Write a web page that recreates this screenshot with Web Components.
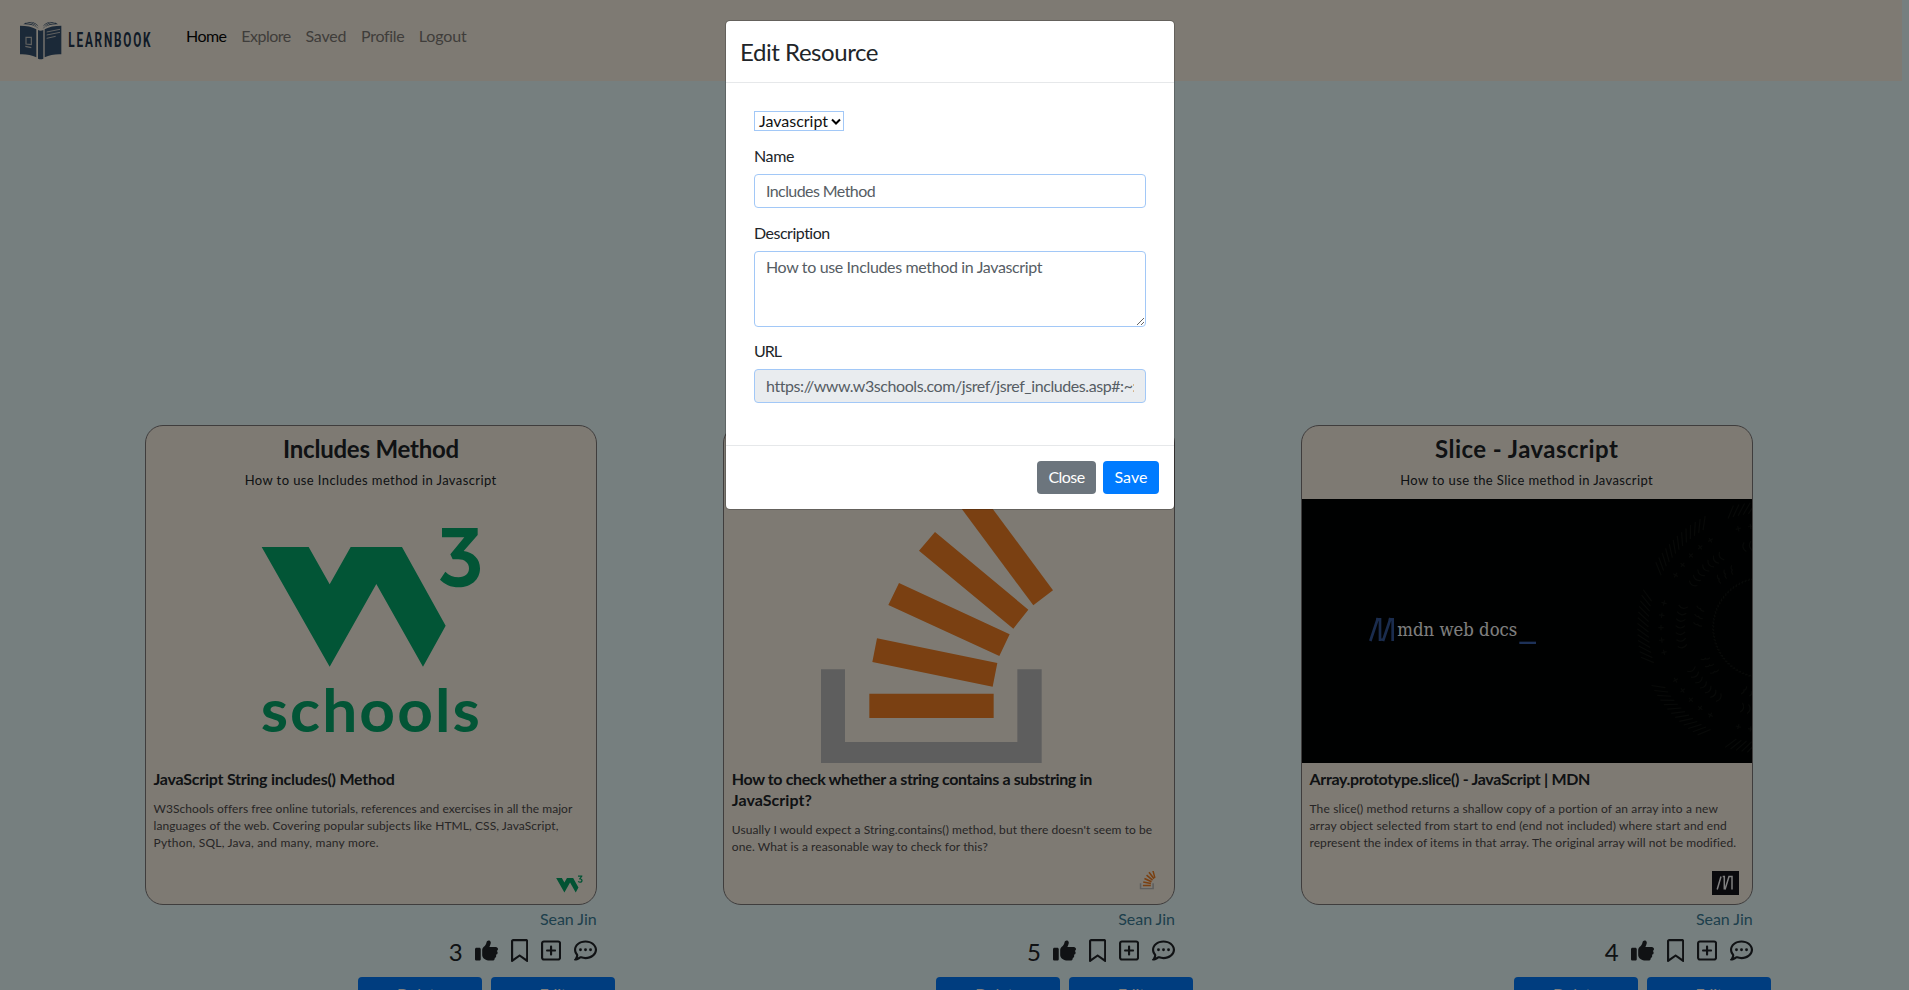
<!DOCTYPE html>
<html lang="en">
<head>
<meta charset="utf-8">
<title>Learnbook</title>
<style>
html, body { margin: 0; height: 990px; overflow: hidden; }
body { background: #ecfeff; font-family: Lato, "Noto Sans", sans-serif; font-size: 16px; line-height: 24px; color: #212529; }
</style>
</head>
<body>
<learnbook-app></learnbook-app>
<script>
const ctx = document.createElement('canvas').getContext('2d');
/* letter spacing that makes a text take the given width */
function spacing(text, width, size, weight) {
  ctx.font = `${weight || 400} ${size}px Lato, "Noto Sans", sans-serif`;
  return (width - ctx.measureText(text).width) / text.length;
}
function define(name, render, after) {
  customElements.define(name, class extends HTMLElement {
    constructor() { super(); this.attachShadow({ mode: 'open' }); }
    connectedCallback() {
      this.shadowRoot.innerHTML = render(this);
      if (after) after(this);
    }
  });
}
const at = (el, n, d = '') => el.getAttribute(n) ?? d;

/* one line of text: s size, w width, b weight, l line height */
define('text-line', el => {
  const s = +at(el, 's', 16), w = +at(el, 'w'), b = at(el, 'b', '400');
  const sp = spacing(at(el, 't'), w, s, b);
  return `<style>:host{display:block;flex:none;width:${w}px;white-space:nowrap;font-size:${s}px;font-weight:${b};line-height:${at(el, 'l', 24)}px;letter-spacing:${sp.toFixed(3)}px}</style>${at(el, 't')}`;
});

define('brand-logo', () => `<style>:host{display:block;width:186px;height:81px}svg{display:block;overflow:visible}</style>
<svg width="186" height="81" viewBox="0 0 558 243"><g fill="#365271">
<path d="M60 77C80 77 96 80 109 88V172C94 165 77 162 60 163Z"/><path d="M184 77C164 77 147 80 134 88V172C149 165 166 162 184 163Z"/>
<path d="M114 90Q122 94 130 90V176Q122 179 114 176Z"/>
<path d="M70 73Q82 63 96 68Q108 74 116 86Q98 72 70 73Z"/><path d="M92 65Q108 66 116 80Q106 70 92 65Z"/>
<path d="M174 73Q162 63 148 68Q136 74 128 86Q146 72 174 73Z"/><path d="M152 65Q136 66 128 80Q138 70 152 65Z"/></g>
<g fill="none" stroke="#c4c4c0" stroke-width="3.5"><path d="M78 112H94V134L78 132ZM76 139L94 143"/><path d="M140 96L180 88M140 105L180 97M140 115L167 109" stroke-width="3"/></g>
<path d="M78 68Q96 68 112 82M166 68Q148 68 132 82" fill="none" stroke="#fdf5e6" stroke-width="2.5"/>
<text x="205" y="141" textLength="252" lengthAdjust="spacingAndGlyphs" font-family="Roboto" font-weight="700" font-size="59" letter-spacing="9" fill="#23374e">LEARNBOOK</text></svg>`);

define('nav-bar', () => `<style>:host{display:flex;box-sizing:border-box;width:1902px;height:81px;padding-left:0;background:#fdf5e6}
nav{display:flex;gap:14.7px;padding-top:24px;color:#7f7b76}.on{color:#070707}</style>
<brand-logo></brand-logo><nav>
<text-line class="on" t="Home" w="40.5"></text-line><text-line t="Explore" w="49.5"></text-line><text-line t="Saved" w="41"></text-line><text-line t="Profile" w="43"></text-line><text-line t="Logout" w="48"></text-line></nav>`);

const w3 = `<path d="M395 396H536L599 508L662 396H816L947 632L879 755L739 507L599 755Z"/><path d="M936 339H1043V360L1001 408C1030 412 1050 432 1050 460C1050 495 1022 517 987 517C962 517 943 507 930 494L946 470C957 481 970 487 986 487C1005 487 1017 476 1017 460C1017 443 1003 433 985 433H968L961 418L1003 367H936Z"/>`;
const so = `<path fill="#bcbcbc" d="M333 538H405V756H922V538H995V819H333Z"/><path fill="#f48024" d="M478 611H851V684H478ZM501 445L862 519L848 590L487 516ZM567 279L899 433L868 498L535 345ZM675 126L955 359L910 416L627 182Z"/>`;
const polar = (r, a) => [1419 - r * Math.cos(a), 638 - r * Math.sin(a)];
function rings() {
  let o = '';
  const put = (r, deg, rot, d) => {
    const [x, y] = polar(r, deg * Math.PI / 180);
    if (x < 1400) o += `<path transform="translate(${x.toFixed(1)} ${y.toFixed(1)}) rotate(${(deg + rot).toFixed(1)})" d="${d}"/>`;
  };
  for (let g = -90; g <= 90; g += 45) {
    for (let i = -6; i <= 6; i++) put(360, g + i * 2.6, 38, 'M-21 0H21');
    for (let i = -2; i <= 2; i++) put(306, g + i * 7, 0, 'M-8 0H8M0-8V8');
    for (let i = -3; i <= 3; i++) put(248, g + i * 4.6, 0, 'M-14-6Q0 8 14-6');
    for (let i = -1; i <= 1; i++) put(196, g + 10 + i * 7, 20, 'M-14 0Q-4 6 0 0Q4 6 14 0');
  }
  for (let a = -90; a <= 90; a += 4) put(150, a, 45, 'M-3 0H3V3');
  return o;
}
const art = {
  w3: () => `<g transform="translate(-16 -84) scale(.33333)" fill="#04aa6d">${w3}<text x="392" y="951" font-family="Lato" font-weight="700" font-size="180" letter-spacing="6" textLength="664" lengthAdjust="spacingAndGlyphs">schools</text></g>`,
  so: () => `<g transform="translate(-14 -9) scale(.33333)">${so}<path fill="#f48024" d="M728 20H821L1029 301L970 346Z"/></g>`,
  mdn: () => `<rect width="450" height="264" fill="#010302"/><g transform="translate(-12 -84) scale(.33333)"><g fill="none" stroke="#101311" stroke-width="3.5">${rings()}</g>
<path d="M241 678L264 609M270 609V678M279 678L302 609M308 609V678" fill="none" stroke="#35599d" stroke-width="8"/><path d="M258 613H273M268 674H281M296 613H311" stroke="#35599d" stroke-width="7"/>
<rect x="688" y="680" width="50" height="7" fill="#3a63b0"/><text x="322" y="663" font-family="DejaVu Serif" font-size="56" textLength="360" lengthAdjust="spacingAndGlyphs" fill="#fff">mdn web docs</text></g>`
};
define('preview-art', el => `<style>:host{display:block;height:264px}svg{display:block}</style><svg width="450" height="264" viewBox="0 0 450 264">${art[at(el, 'kind')]()}</svg>`);

const fav = {
  w3: `<g transform="translate(-15.8 -9.1) scale(.0404)" fill="#04a567">${w3}</g>`,
  so: `<g transform="translate(-1.3 .8) scale(.0213)"><g>${so}<path fill="#f48024" d="M735 42L795 0L1029 301L970 346ZM910 -60L980 -80L1075 280L1010 290Z"/></g></g>`,
  mdn: `<rect width="27" height="24" fill="#15141a"/><path d="M5.2 18.5L9 5.5M10.7 5.5H12.3V18.5M13 18.5L17 5.5H20V18.5" fill="none" stroke="#fff" stroke-width="1.5"/>`
};
define('site-icon', el => `<style>:host{display:block;width:27px;height:24px}svg{display:block}</style><svg width="27" height="24">${fav[at(el, 'kind')]}</svg>`);

const icons = {
  thumb: [512, 'M313.4 32.9c26 5.2 42.9 30.5 37.7 56.5l-2.3 11.4c-5.3 26.7-15.1 52.1-28.8 75.2H464c26.5 0 48 21.5 48 48c0 18.5-10.5 34.6-25.9 42.6C497 275.4 504 288.9 504 304c0 23.4-16.8 42.9-38.9 47.1c4.4 7.3 6.9 15.8 6.9 24.9c0 21.3-13.9 39.4-33.1 45.6c.7 3.3 1.1 6.8 1.1 10.4c0 26.5-21.5 48-48 48H294.5c-19 0-37.5-5.6-53.3-16.1l-38.5-25.7C176 420.4 160 390.4 160 358.3V320 272 247.1c0-29.2 13.3-56.7 36-75l7.4-5.9c26.5-21.2 44.6-51 51.2-84.2l2.3-11.4c5.2-26 30.5-42.9 56.5-37.7zM32 192H96c17.7 0 32 14.3 32 32V448c0 17.7-14.3 32-32 32H32c-17.7 0-32-14.3-32-32V224c0-17.7 14.3-32 32-32z'],
  mark: [384, 'M0 48C0 21.5 21.5 0 48 0l0 48V441.4l130.1-92.9c8.3-6 19.6-6 27.9 0L336 441.4V48H48V0H336c26.5 0 48 21.5 48 48V488c0 9-5 17.2-13 21.3s-17.6 3.4-24.9-1.8L192 397.5 37.9 507.5c-7.3 5.2-16.9 5.9-24.9 1.8S0 497 0 488V48z'],
  plus: [448, 'M64 80c-8.8 0-16 7.2-16 16V416c0 8.8 7.2 16 16 16H384c8.8 0 16-7.2 16-16V96c0-8.8-7.2-16-16-16H64zM0 96C0 60.7 28.7 32 64 32H384c35.3 0 64 28.7 64 64V416c0 35.3-28.7 64-64 64H64c-35.3 0-64-28.7-64-64V96zM200 344V280H136c-13.3 0-24-10.7-24-24s10.7-24 24-24h64V168c0-13.3 10.7-24 24-24s24 10.7 24 24v64h64c13.3 0 24 10.7 24 24s-10.7 24-24 24H248v64c0 13.3-10.7 24-24 24s-24-10.7-24-24z'],
  dots: [512, 'M168.2 384.9c-15-5.4-31.7-3.1-44.6 6.4c-8.2 6-22.3 14.8-39.4 22.7c5.6-14.7 9.9-31.3 11.3-49.4c1-12.9-3.3-25.7-11.8-35.5C60.4 302.8 48 272 48 240c0-79.5 83.3-160 208-160s208 80.5 208 160s-83.3 160-208 160c-31.6 0-61.3-5.5-87.8-15.1zM26.3 423.8c-1.6 2.7-3.3 5.4-5.1 8.1l-.3 .5c-1.6 2.3-3.2 4.6-4.8 6.9c-3.5 4.7-7.3 9.3-11.3 13.5c-4.6 4.6-5.9 11.4-3.4 17.4c2.5 6 8.3 9.9 14.8 9.9c5.1 0 10.2-.3 15.3-.8l.7-.1c4.4-.5 8.8-1.1 13.2-1.9c.8-.1 1.6-.3 2.4-.5c17.8-3.5 34.9-9.5 50.1-16.1c22.9-10 42.4-21.9 54.3-30.6c31.8 11.5 67 17.9 104.1 17.9c141.4 0 256-93.1 256-208S397.4 32 256 32S0 125.1 0 240c0 45.1 17.7 86.8 47.7 120.9c-1.9 24.5-11.4 46.3-21.4 62.9zM144 272a32 32 0 1 0 0-64 32 32 0 1 0 0 64zm144-32a32 32 0 1 0 -64 0 32 32 0 1 0 64 0zm80 32a32 32 0 1 0 0-64 32 32 0 1 0 0 64z']
};
define('action-icon', el => { const [w, d] = icons[at(el, 'kind')];
  return `<style>:host{display:block;flex:none}svg{display:block}</style><svg width="${w * 23 / 512}" height="23" viewBox="0 0 ${w} 512"><path fill="#212529" d="${d}"/></svg>`; });

define('ui-button', el => `<style>:host{display:flex;flex:none;box-sizing:border-box;justify-content:center;width:${at(el, 'w')}px;height:33px;padding-top:3.5px;border-radius:4px;color:#fff;background:var(--bg,#007bff)}</style><slot></slot>`);

define('resource-card', el => `<style>
:host{display:block;width:452px}
article{display:flex;flex-direction:column;box-sizing:border-box;height:480px;border:1px solid #7e7a7a;border-radius:18px;background:#fdf5e6;overflow:hidden}
header{display:flex;flex-direction:column;align-items:center;height:73px}
.body{height:132px;box-sizing:border-box;padding:5px 7.5px 0}
.desc{color:#4e4b4c;padding-top:11px}
.site{display:flex;justify-content:flex-end;padding-right:13px;margin-top:-24px}
.by{display:flex;justify-content:flex-end;color:#3c7e98;padding-top:2px}
.acts{display:flex;gap:13px;justify-content:flex-end;padding-top:8px;height:38px}
.acts text-line{padding-top:1px}
.btns{display:flex;gap:9px;padding-left:213px}
</style><article><header><slot name="head"></slot></header><preview-art kind="${at(el, 'kind')}"></preview-art>
<div class="body"><slot name="title"></slot><div class="desc"><slot name="desc"></slot></div></div>
<div class="site"><site-icon kind="${at(el, 'kind')}"></site-icon></div></article>
<div class="by"><text-line t="Sean Jin" w="57"></text-line></div>
<div class="acts"><text-line t="${at(el, 'likes')}" s="24" w="13" l="24"></text-line><action-icon kind="thumb"></action-icon><action-icon kind="mark"></action-icon><action-icon kind="plus"></action-icon><action-icon kind="dots"></action-icon></div>
<div class="btns"><ui-button w="124"><text-line t="Delete" w="46" l="25"></text-line></ui-button><ui-button w="124"><text-line t="Edit" w="27" l="25"></text-line></ui-button></div>`);

define('form-field', el => {
  const t = at(el, 'value'), fit = at(el, 'fit', t);
  const sp = spacing(fit, +at(el, 'fw'), 16).toFixed(3);
  const css = `<style>:host{display:block}
input,textarea{display:block;box-sizing:border-box;width:392px;height:34px;margin:0 0 12px;padding:4px 11px 6px;border:1px solid #a2c8f7;border-radius:4px;background:#fff;font:16px/22px Lato,"Noto Sans",sans-serif;letter-spacing:${sp}px;color:#565d64}
textarea{height:76px;padding-top:4px;resize:vertical;overflow:hidden}input:disabled{background:#e9ecef}text-line{padding-bottom:6px}</style><text-line t="${at(el, 'label')}" w="${at(el, 'lw')}" l="25"></text-line>`;
  return css + (el.hasAttribute('area') ? `<textarea>${t}</textarea>` : `<input value="${t}" ${el.hasAttribute('off') ? 'disabled' : ''}>`);
});

define('select-box', () => `<style>:host{display:flex;box-sizing:border-box;width:90px;height:20px;margin:0 0 12px;padding-left:4px;border:1px solid #a2c8f7;background:#fff;color:#111}
svg{display:block;margin:6px 0 0 3px}</style><text-line t="Javascript" w="69" l="18"></text-line><svg width="10" height="8" viewBox="0 0 10 8"><path d="M1 1.5L5 5.5L9 1.5" fill="none" stroke="#000" stroke-width="2"/></svg>`);

define('edit-dialog', () => `<style>
:host{position:absolute;left:0;top:0;width:1909px;height:990px;background:rgba(0,0,0,.5)}
section{box-sizing:border-box;width:450px;height:490px;margin:20px 0 0 725px;border:1px solid rgba(0,0,0,.2);border-radius:5px;background:#fff;background-clip:padding-box}
header{height:62px;padding:12.5px 0 0 14px;box-sizing:border-box;border-bottom:1px solid #e6e8ea}
form{display:flex;flex-direction:column;height:362px;box-sizing:border-box;padding:28px 28px 0}
footer{display:flex;gap:7px;justify-content:flex-end;padding:15px 15px 0 0;border-top:1px solid #e6e8ea}
ui-button:first-child{--bg:#6c757d}
</style><section><header><text-line t="Edit Resource" s="24" w="138" l="36"></text-line></header>
<form><select-box></select-box>
<form-field label="Name" lw="40" value="Includes Method" fw="109"></form-field>
<form-field area label="Description" lw="76" value="How to use Includes method in Javascript" fw="277"></form-field>
<form-field style="margin-top:-1px" off label="URL" lw="27" value="https://www.w3schools.com/jsref/jsref_includes.asp#:~:text=The" fit="https://www.w3schools.com/jsref/jsref_includes.asp#:~" fw="366"></form-field></form>
<footer><ui-button w="59"><text-line t="Close" w="36"></text-line></ui-button><ui-button w="56"><text-line t="Save" w="33"></text-line></ui-button></footer></section>`);

define('learnbook-app', () => {
  const line = (slot, t, w, s, b, l) => `<text-line slot="${slot}" t="${t}" w="${w}" s="${s}" b="${b}" l="${l}"></text-line>`;
  const cards = [
    ['w3', 3, [['Includes Method', 176], ['How to use Includes method in Javascript', 252.5]], [['JavaScript String includes() Method', 241]],
      [['W3Schools offers free online tutorials, references and exercises in all the major', 418.5], ['languages of the web. Covering popular subjects like HTML, CSS, JavaScript,', 406], ['Python, SQL, Java, and many, many more.', 226]]],
    ['so', 5, [], [['How to check whether a string contains a substring in', 361], ['JavaScript?', 80]],
      [["Usually I would expect a String.contains() method, but there doesn't seem to be", 421], ['one. What is a reasonable way to check for this?', 257]]],
    ['mdn', 4, [['Slice - Javascript', 184], ['How to use the Slice method in Javascript', 253.5]], [['Array.prototype.slice() - JavaScript | MDN', 281]],
      [['The slice() method returns a shallow copy of a portion of an array into a new', 410], ['array object selected from start to end (end not included) where start and end', 418], ['represent the index of items in that array. The original array will not be modified.', 427.5]]]
  ];
  return `<style>:host{display:block;width:1909px;height:990px;overflow:hidden}
main{display:grid;grid-template-columns:repeat(3,452px);column-gap:126px;padding:344px 0 0 145px}
resource-card:nth-child(2){margin-left:.3px}</style>
<nav-bar></nav-bar><main>${cards.map(([k, n, h, t, d]) => `<resource-card kind="${k}" likes="${n}">${h.map((x, i) => i ? line('head', x[0], x[1], 13, 400, 16) : line('head', x[0], x[1], 24, 700, 46)).join('')}${t.map(x => line('title', x[0], x[1], 16, 700, 21)).join('')}${d.map(x => line('desc', x[0], x[1], 12, 400, 17)).join('')}</resource-card>`).join('')}</main>
<edit-dialog></edit-dialog>`;
});
</script>
</body>
</html>
